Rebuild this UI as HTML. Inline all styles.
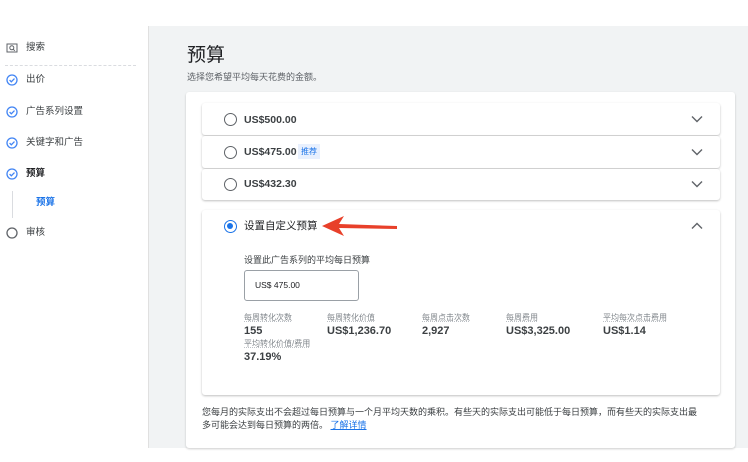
<!DOCTYPE html>
<html><head><meta charset="utf-8"><style>
*{margin:0;padding:0;box-sizing:border-box}
body{width:748px;height:462px;background:#fff;font-family:"Liberation Sans","Noto Sans CJK SC",sans-serif;color:#3c4043;position:relative;overflow:hidden}
.abs{position:absolute}
.side{font-size:9.5px;color:#3c4043}
.side div{position:absolute;left:26px;line-height:12px}
.ico{position:absolute;left:6px;width:12px;height:12px}
.gray{left:148px;top:26px;width:600px;height:422px;background:#f1f3f4;border-left:1px solid #e0e0e0}
.card{left:186px;top:92px;width:549px;height:356px;background:#fff;border-radius:3px;box-shadow:0 1px 2px rgba(0,0,0,.2)}
.row{position:absolute;left:202px;width:518px;background:#fff;border-radius:3px;box-shadow:0 1px 2px rgba(0,0,0,.25)}
.radio{position:absolute;left:22px;width:13px;height:13px;border:1.5px solid #5f6368;border-radius:50%}
.rt{position:absolute;left:42px;font-size:10.5px;font-weight:bold;color:#3c4043;line-height:12px}
.chev{position:absolute;left:489px;width:12px;height:8px}
.lab{position:absolute;font-size:8px;color:#80868b;text-decoration:underline dotted #bdc1c6;line-height:10px}
.val{position:absolute;font-size:11px;font-weight:bold;color:#3c4043;line-height:12px}
</style></head><body>
<div class="side">
<svg class="ico" style="top:42px" viewBox="0 0 12 12"><rect x="1" y="2" width="10" height="8" fill="none" stroke="#5f6368"/><circle cx="5.8" cy="5.8" r="2" fill="none" stroke="#5f6368"/><path d="M7.3 7.3l1.5 1.5" stroke="#5f6368"/></svg>
<div style="top:42px">搜索</div>
<div class="abs" style="left:5px;top:65px;width:131px;border-top:1px dashed #dadce0"></div>
<svg class="ico" style="top:74px" viewBox="0 0 12 12"><circle cx="6" cy="6" r="5" fill="none" stroke="#4285f4" stroke-width="1.3"/><path d="M3.6 6.1l1.7 1.7 3.2-3.2" fill="none" stroke="#4285f4" stroke-width="1.3"/></svg>
<div style="top:74px">出价</div>
<svg class="ico" style="top:106px" viewBox="0 0 12 12"><circle cx="6" cy="6" r="5" fill="none" stroke="#4285f4" stroke-width="1.3"/><path d="M3.6 6.1l1.7 1.7 3.2-3.2" fill="none" stroke="#4285f4" stroke-width="1.3"/></svg>
<div style="top:106px">广告系列设置</div>
<svg class="ico" style="top:137px" viewBox="0 0 12 12"><circle cx="6" cy="6" r="5" fill="none" stroke="#4285f4" stroke-width="1.3"/><path d="M3.6 6.1l1.7 1.7 3.2-3.2" fill="none" stroke="#4285f4" stroke-width="1.3"/></svg>
<div style="top:137px">关键字和广告</div>
<svg class="ico" style="top:168px" viewBox="0 0 12 12"><circle cx="6" cy="6" r="5" fill="none" stroke="#4285f4" stroke-width="1.3"/><path d="M3.6 6.1l1.7 1.7 3.2-3.2" fill="none" stroke="#4285f4" stroke-width="1.3"/></svg>
<div style="top:168px;font-weight:bold;color:#202124">预算</div>
<div class="abs" style="left:12px;top:191px;width:1px;height:27px;background:#dadce0"></div>
<div style="top:197px;left:36px;font-weight:bold;color:#1a73e8">预算</div>
<svg class="ico" style="top:227px" viewBox="0 0 12 12"><circle cx="6" cy="6" r="5" fill="none" stroke="#5f6368" stroke-width="1.3"/></svg>
<div style="top:227px">审核</div>
</div>
<div class="abs gray"></div>
<div class="abs" style="left:187px;top:40px;font-size:19px;color:#202124">预算</div>
<div class="abs" style="left:187px;top:70px;font-size:9px;color:#5f6368">选择您希望平均每天花费的金额。</div>
<div class="abs card"></div>
<div class="row" style="top:103px;height:32px"><div class="radio" style="top:10px"></div><div class="rt" style="top:11px">US$500.00</div><svg class="chev" style="top:12px" viewBox="0 0 12 8"><path d="M1 1.5l5 5 5-5" fill="none" stroke="#5f6368" stroke-width="1.4"/></svg></div>
<div class="row" style="top:136px;height:32px"><div class="radio" style="top:10px"></div><div class="rt" style="top:10px">US$475.00</div><div class="abs" style="left:96px;top:8px;height:15px;padding:0 3px;background:#e8f0fe;color:#1a73e8;font-size:8px;line-height:15px">推荐</div><svg class="chev" style="top:12px" viewBox="0 0 12 8"><path d="M1 1.5l5 5 5-5" fill="none" stroke="#5f6368" stroke-width="1.4"/></svg></div>
<div class="row" style="top:169px;height:31px"><div class="radio" style="top:9px"></div><div class="rt" style="top:9px">US$432.30</div><svg class="chev" style="top:11px" viewBox="0 0 12 8"><path d="M1 1.5l5 5 5-5" fill="none" stroke="#5f6368" stroke-width="1.4"/></svg></div>
<div class="row" style="top:210px;height:185px">
<div class="radio" style="top:10px;border-color:#1a73e8"><div class="abs" style="left:2px;top:2px;width:6px;height:6px;border-radius:50%;background:#1a73e8"></div></div>
<div class="rt" style="top:10px;font-weight:normal;color:#202124">设置自定义预算</div>
<svg class="chev" style="top:12px" viewBox="0 0 12 8"><path d="M1 6.5l5-5 5 5" fill="none" stroke="#5f6368" stroke-width="1.4"/></svg>
<svg class="abs" style="left:118px;top:4px" width="80" height="24" viewBox="0 0 80 24"><path d="M2 12L24 2 19 10 77 12 77 15 19 14 24 22Z" fill="#e8402a"/></svg>
<div class="abs" style="left:42px;top:43px;font-size:9px;color:#3c4043">设置此广告系列的平均每日预算</div>
<div class="abs" style="left:42px;top:60px;width:115px;height:31px;border:1px solid #9aa0a6;border-radius:3px;font-size:8.5px;line-height:29px;padding-left:10px;color:#202124">US$ 475.00</div>
<div class="lab" style="left:42px;top:103px">每周转化次数</div><div class="val" style="left:42px;top:115px">155</div>
<div class="lab" style="left:125px;top:103px">每周转化价值</div><div class="val" style="left:125px;top:115px">US$1,236.70</div>
<div class="lab" style="left:220px;top:103px">每周点击次数</div><div class="val" style="left:220px;top:115px">2,927</div>
<div class="lab" style="left:304px;top:103px">每周费用</div><div class="val" style="left:304px;top:115px">US$3,325.00</div>
<div class="lab" style="left:401px;top:103px">平均每次点击费用</div><div class="val" style="left:401px;top:115px">US$1.14</div>
<div class="lab" style="left:42px;top:129px">平均转化价值/费用</div><div class="val" style="left:42px;top:141px">37.19%</div>
</div>
<div class="abs" style="left:202px;top:406px;width:540px;font-size:9px;line-height:13px;color:#3c4043;white-space:nowrap">您每月的实际支出不会超过每日预算与一个月平均天数的乘积。有些天的实际支出可能低于每日预算，而有些天的实际支出最<br>多可能会达到每日预算的两倍。 <span style="color:#1a73e8;text-decoration:underline">了解详情</span></div>
</body></html>
